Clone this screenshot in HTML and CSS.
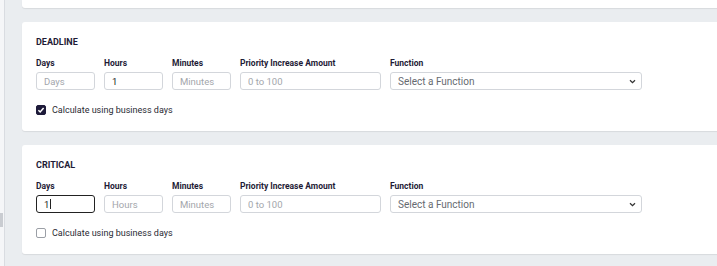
FILE: index.html
```html
<!DOCTYPE html>
<html lang="en">

<head>
    <meta charset="UTF-8">
    <meta name="viewport" content="width=device-width, initial-scale=1.0">
    <link rel="stylesheet" href="styles.css">
    <title>Escalation Rules</title>
</head>

<body>
    <div class="page">
        <div class="rail"><span class="thumb"></span></div>
        <div class="main">
            <div class="card card-top"></div>

            <div class="card">
                <h3 class="card-title">DEADLINE</h3>
                <div class="fields">
                    <div class="field f-small">
                        <label>Days</label>
                        <input type="text" placeholder="Days">
                    </div>
                    <div class="field f-small">
                        <label>Hours</label>
                        <input type="text" value="1">
                    </div>
                    <div class="field f-small">
                        <label>Minutes</label>
                        <input type="text" placeholder="Minutes">
                    </div>
                    <div class="field f-mid">
                        <label>Priority Increase Amount</label>
                        <input type="text" placeholder="0 to 100">
                    </div>
                    <div class="field f-wide">
                        <label>Function</label>
                        <div class="select">
                            <select>
                                <option>Select a Function</option>
                            </select>
                            <svg class="chev" width="7" height="5" viewBox="0 0 7 5"><path d="M1 1.2 L3.5 3.6 L6 1.2" fill="none" stroke="#333" stroke-width="1.3"/></svg>
                        </div>
                    </div>
                </div>
                <div class="check-row">
                    <span class="box checked"><svg width="8" height="8" viewBox="0 0 8 8"><path d="M1.4 4.2 L3.2 6 L6.6 2" fill="none" stroke="#fff" stroke-width="1.5"/></svg></span>
                    <span>Calculate using business days</span>
                </div>
            </div>

            <div class="card">
                <h3 class="card-title">CRITICAL</h3>
                <div class="fields">
                    <div class="field f-small">
                        <label>Days</label>
                        <div class="focus-wrap">
                            <input type="text" class="focused" value="1">
                            <span class="caret"></span>
                        </div>
                    </div>
                    <div class="field f-small">
                        <label>Hours</label>
                        <input type="text" placeholder="Hours">
                    </div>
                    <div class="field f-small">
                        <label>Minutes</label>
                        <input type="text" placeholder="Minutes">
                    </div>
                    <div class="field f-mid">
                        <label>Priority Increase Amount</label>
                        <input type="text" placeholder="0 to 100">
                    </div>
                    <div class="field f-wide">
                        <label>Function</label>
                        <div class="select">
                            <select>
                                <option>Select a Function</option>
                            </select>
                            <svg class="chev" width="7" height="5" viewBox="0 0 7 5"><path d="M1 1.2 L3.5 3.6 L6 1.2" fill="none" stroke="#333" stroke-width="1.3"/></svg>
                        </div>
                    </div>
                </div>
                <div class="check-row">
                    <span class="box"></span>
                    <span>Calculate using business days</span>
                </div>
            </div>
        </div>
    </div>
</body>

</html>
```

FILE: styles.css
```css
body {
    margin: 0;
    font-family: Roboto, "Liberation Sans", sans-serif;
    background-color: #eaedf0;
    overflow: hidden;
}

.page {
    display: flex;
    height: 266px;
}

.rail {
    width: 4px;
    background-color: #f5f6f8;
    border-right: 1px solid #d9dce1;
    position: relative;
}

.thumb {
    position: absolute;
    left: 0;
    top: 213px;
    width: 3px;
    height: 14px;
    background-color: #c9ccd1;
}

.main {
    flex: 1;
    padding-left: 17px;
    margin-right: -20px;
    display: flex;
    flex-direction: column;
    gap: 14px;
}

.card {
    background-color: #fff;
    border-radius: 3px;
    box-shadow: 0 1px 1px rgba(0, 0, 0, 0.08);
    padding: 14px 14px 15px;
}

.card-top {
    height: 8px;
    padding: 0;
    border-radius: 0 0 3px 3px;
}

.card-title {
    margin: 0 0 9px;
    font-size: 9px;
    line-height: 12px;
    font-weight: 700;
    color: #1e1b36;
}

.fields {
    display: flex;
    gap: 9px;
}

.field {
    display: flex;
    flex-direction: column;
}

.f-small {
    width: 59px;
}

.f-mid {
    width: 141px;
}

.f-wide {
    width: 252px;
}

label {
    font-size: 8.5px;
    line-height: 12px;
    font-weight: 700;
    color: #1e1b36;
    margin-bottom: 3px;
}

input,
select {
    display: block;
    box-sizing: border-box;
    width: 100%;
    height: 18px;
    border: 1px solid #d3d6db;
    border-radius: 3px;
    padding: 0 7px;
    font-family: Roboto, "Liberation Sans", sans-serif;
    font-size: 9.5px;
    color: #222;
    background-color: #fff;
    outline: none;
}

input::placeholder {
    color: #a3a6ab;
}

select {
    appearance: none;
    font-size: 10px;
    color: #666a70;
}

.select,
.focus-wrap {
    position: relative;
}

.chev {
    position: absolute;
    right: 6px;
    top: 7px;
}

input.focused {
    border: 1.5px solid #222;
    padding-left: 7px;
}

.caret {
    position: absolute;
    left: 13.5px;
    top: 4px;
    width: 1px;
    height: 10px;
    background-color: #222;
}

.check-row {
    display: flex;
    align-items: center;
    gap: 6px;
    margin-top: 14px;
    font-size: 9px;
    line-height: 12px;
    color: #2a2a33;
}

.box {
    box-sizing: border-box;
    width: 10px;
    height: 10px;
    border: 1px solid #9b9fa6;
    border-radius: 2px;
    display: flex;
    align-items: center;
    justify-content: center;
}

.box.checked {
    background-color: #1e1b3a;
    border-color: #1e1b3a;
}
```
